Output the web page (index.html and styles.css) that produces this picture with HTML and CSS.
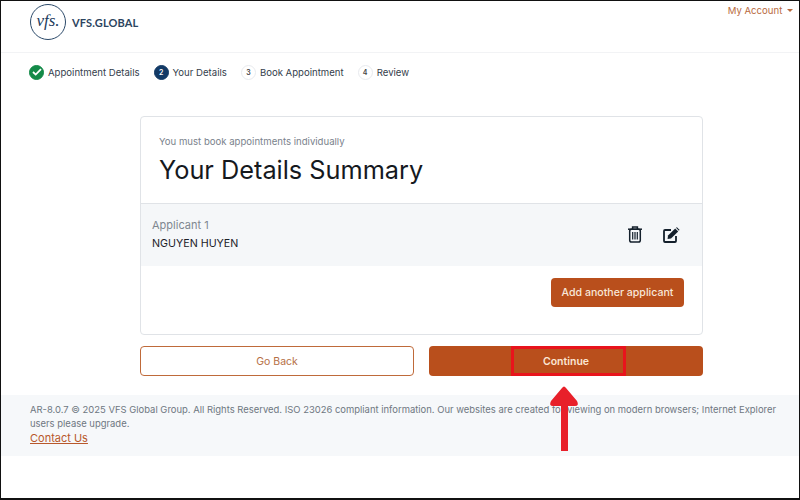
FILE: index.html
```html
<!DOCTYPE html>
<html lang="en">
<head>
  <meta charset="UTF-8">
  <title>Your Details Summary</title>
  <link rel="stylesheet" href="styles.css">
</head>
<body>
  <div class="page">
    <!-- header -->
    <header class="top-bar">
      <div class="logo">
        <div class="logo-mark">vfs.</div>
        <span class="logo-name">VFS.GLOBAL</span>
      </div>
      <a class="account" href="#">My Account <span class="caret"></span></a>
    </header>

    <!-- steps -->
    <div class="steps">
      <div class="step">
        <span class="dot dot-done">
          <svg width="10" height="8" viewBox="0 0 10 8"><path d="M1 4l2.7 2.6L9 1.2" fill="none" stroke="#fff" stroke-width="1.8"/></svg>
        </span>
        Appointment Details
      </div>
      <div class="step"><span class="dot dot-active">2</span>Your Details</div>
      <div class="step"><span class="dot">3</span>Book Appointment</div>
      <div class="step"><span class="dot">4</span>Review</div>
    </div>

    <main class="content">
      <section class="card">
        <div class="card-head">
          <p class="hint">You must book appointments individually</p>
          <h1>Your Details Summary</h1>
        </div>
        <div class="applicant">
          <div>
            <div class="applicant-label">Applicant 1</div>
            <div class="applicant-name">NGUYEN HUYEN</div>
          </div>
          <div class="applicant-actions">
            <svg width="14" height="17" viewBox="0 0 14 17" fill="none" stroke="#14202c" stroke-width="1.5">
              <path d="M0 3.2h14" />
              <path d="M4.6 3V1h4.8v2" />
              <rect x="1.7" y="3.2" width="10.6" height="12.9" rx="1.8" />
              <path d="M4.7 6v7.4M7 6v7.4M9.3 6v7.4" stroke-width="1.2" />
            </svg>
            <svg width="17" height="16" viewBox="0 0 17 16">
              <path d="M13 9v5a1 1 0 0 1-1 1H2a1 1 0 0 1-1-1V4a1 1 0 0 1 1-1h6" fill="none" stroke="#14202c" stroke-width="1.8" />
              <path d="M5 8.6L12.2 1.5l3 3L8 11.6l-3.4.5z" fill="#14202c" />
              <path d="M13 .8l.9-.6 2.6 2.6-.6.9z" fill="#14202c" />
            </svg>
          </div>
        </div>
        <div class="card-foot">
          <button class="btn btn-small">Add another applicant</button>
        </div>
      </section>

      <div class="actions">
        <button class="btn btn-outline">Go Back</button>
        <button class="btn btn-fill">Continue</button>
      </div>
    </main>

    <footer class="foot">
      <p>AR-8.0.7 © 2025 VFS Global Group. All Rights Reserved. ISO 23026 compliant information. Our websites are created for viewing on modern browsers; Internet Explorer users please upgrade.</p>
      <a href="#">Contact Us</a>
    </footer>

    <!-- annotation over the screenshot -->
    <div class="mark-box"></div>
    <svg class="mark-arrow" width="28" height="65" viewBox="0 0 28 65">
      <path d="M14 0.5Q15 0.5 16 2L27 15Q29.500 20 25 20H18V65H11V20H3Q-1.500 20 1 15L12 2Q13 .5 14 .5z" fill="#e8202a" />
    </svg>
  </div>
</body>
</html>
```

FILE: styles.css
```css
* { box-sizing: border-box; }
body {
  margin: 0;
  font-family: 'Inter', 'Liberation Sans', sans-serif;
  background: #fff;
}
.page {
  position: relative;
  width: 800px;
  height: 500px;
  border: 1px solid #111;
  border-width: 1px 1px 2px 1px;
  overflow: hidden;
  background: #fff;
}
.top-bar {
  height: 52px;
  display: flex;
  justify-content: space-between;
  padding: 3px 6px 0 29px;
  border-bottom: 1px solid #f2f3f5;
}
.logo {
  display: flex;
  align-items: flex-start;
  gap: 6px;
}
.logo-mark {
  width: 36px;
  height: 36px;
  border: 1.5px solid #2c4a6a;
  border-radius: 50%;
  color: #1d3b5c;
  font-family: 'Liberation Serif', serif;
  font-style: italic;
  font-size: 17px;
  line-height: 32px;
  text-align: center;
}
.logo-name {
  margin-top: 12px;
  color: #2c4560;
  font-family: 'Lato', sans-serif;
  font-weight: 700;
  font-size: 11px;
  letter-spacing: 0.15px;
}
.account {
  color: #b86a3e;
  font-size: 9.6px;
  text-decoration: none;
  margin-top: 1px;
}
.caret {
  display: inline-block;
  margin-left: 2px;
  vertical-align: 2px;
  border-left: 3px solid transparent;
  border-right: 3px solid transparent;
  border-top: 3px solid #b86a3e;
}
.steps {
  display: flex;
  align-items: center;
  gap: 14px;
  padding-left: 28px;
  height: 38px;
}
.step {
  display: flex;
  align-items: center;
  gap: 4px;
  color: #34404c;
  font-size: 9.6px;
  height: 16px;
}
.dot {
  width: 15px;
  height: 15px;
  border-radius: 50%;
  border: 1px solid #e8eaee;
  color: #444;
  font-size: 7px;
  font-weight: 600;
  display: flex;
  align-items: center;
  justify-content: center;
}
.dot-done { background: #138a48; border-color: #138a48; }
.dot-active { background: #133a66; border-color: #133a66; color: #fff; }
.content {
  width: 563px;
  margin: 25px 0 0 139px;
  height: 279px;
}
.card {
  height: 219px;
  border: 1px solid #e0e3e7;
  border-radius: 4px;
}
.card-head {
  height: 87px;
  padding: 19px 18px 0;
  border-bottom: 1px solid #e0e3e7;
}
.hint {
  margin: 0;
  color: #7a828c;
  font-size: 9.6px;
  line-height: 12px;
}
h1 {
  margin: 7px 0 0;
  color: #15191e;
  font-size: 25.3px;
  font-weight: 400;
  line-height: 30px;
}
.applicant {
  height: 62px;
  background: #f5f7f9;
  padding: 0 22px 2px 11px;
  display: flex;
  align-items: center;
  justify-content: space-between;
}
.applicant-label {
  color: #7f8790;
  font-size: 11px;
  line-height: 14px;
  margin-bottom: 5px;
}
.applicant-name {
  color: #1b2128;
  font-size: 10.7px;
  line-height: 13px;
}
.applicant-actions {
  display: flex;
  align-items: center;
  gap: 21px;
  margin-top: 1px;
}
.card-foot {
  display: flex;
  justify-content: flex-end;
  padding: 12px 18px 0 0;
}
.btn {
  font-family: inherit;
  border-radius: 4px;
  cursor: pointer;
}
.btn-small {
  width: 133px;
  height: 29px;
  background: #b94f1c;
  border: none;
  color: #f8e6d8;
  font-size: 10.6px;
  font-weight: 500;
  padding: 0;
}
.actions {
  display: grid;
  grid-template-columns: 1fr 1fr;
  gap: 15px;
  margin-top: 11px;
}
.actions .btn {
  height: 30px;
  font-size: 10.5px;
  padding: 0;
}
.btn-outline {
  background: #fff;
  border: 1px solid #bf6a3a;
  color: #b56f45;
}
.btn-fill {
  background: #b94f1c;
  border: none;
  color: #fbe6d4;
  font-weight: 600;
}
.foot {
  height: 61px;
  background: #f6f8fa;
  padding: 8px 10px 0 29px;
  color: #6e7781;
  font-size: 9.45px;
  line-height: 14px;
}
.foot p { margin: 0; }
.foot a {
  color: #b8582c;
  font-size: 11px;
  line-height: 15px;
}
.mark-box {
  position: absolute;
  left: 510px;
  top: 345px;
  width: 115px;
  height: 30px;
  border: 3px solid #e8141c;
}
.mark-arrow {
  position: absolute;
  left: 549px;
  top: 385px;
  overflow: visible;
}
```
